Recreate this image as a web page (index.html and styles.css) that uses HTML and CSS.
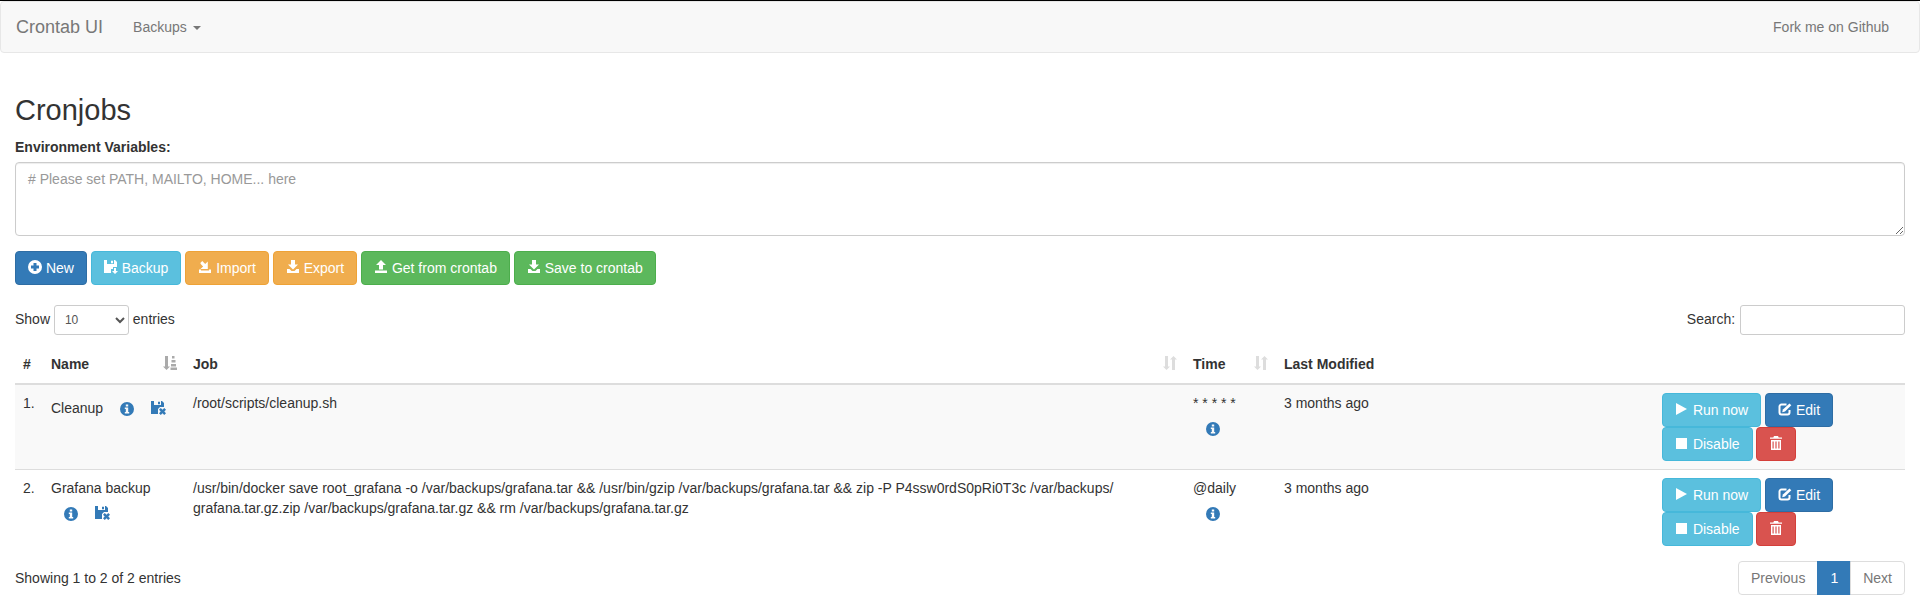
FILE: index.html
```html
<!DOCTYPE html>
<html lang="en">
<head>
<meta charset="utf-8">
<title>Crontab UI</title>
<link rel="stylesheet" href="styles.css">
</head>
<body>
<svg class="defs" width="0" height="0" aria-hidden="true">
  <symbol id="i-plus" viewBox="0 0 14 14"><path fill-rule="evenodd" d="M7 0a7 7 0 1 1 0 14A7 7 0 0 1 7 0zM5.500 3v2.500H3v3h2.500V11h3V8.500H11v-3H8.500V3z"/></symbol>
  <symbol id="i-info" viewBox="0 0 14 14"><path fill-rule="evenodd" d="M7 0a7 7 0 1 1 0 14A7 7 0 0 1 7 0zM5.800 2.600v2h2.400v-2zM4.800 5.600v1.300h1v3H4.800v1.500h4.400V9.900h-1V5.600z"/></symbol>
  <symbol id="i-floppy-save" viewBox="0 0 14 14"><path fill-rule="evenodd" d="M0 0h3v4h7V0h1l2 2v5H9v2H7v4H0z"/><path d="M7 .8h2v2.400H7z"/><path d="M10 8h2v3h2L11 14l-3-3h2z"/></symbol>
  <symbol id="i-floppy-remove" viewBox="0 0 15 14"><path fill-rule="evenodd" d="M0 0h3v4h7V0h1l2 2v4H9L7 8v5H0z"/><path d="M7 .8h2v2.400H7z"/><path d="M9.800 7l1.700 1.700L13.200 7 15 8.800l-1.700 1.700 1.700 1.700-1.800 1.800-1.700-1.700-1.700 1.700L8 12.200l1.700-1.700L8 8.800z"/></symbol>
  <symbol id="i-import" viewBox="0 0 14 14"><path d="M1 9.500h2v1h8v-1h2V13H1z"/><path d="M2.500 2.800L4.300 1l2.900 2.900L9.800 1.500V9H2.500l2.600-2.600L2.500 3.800z"/></symbol>
  <symbol id="i-save" viewBox="0 0 14 14"><path d="M5 0h4v4.500h3L7 9.500 2 4.500h3z"/><path d="M1 9h2.500l2 2h3l2-2H13v4H1z"/></symbol>
  <symbol id="i-open" viewBox="0 0 14 14"><path d="M7 0l5 5H9v4.500H5V5H2z"/><path d="M1 10.500h12V13H1z"/></symbol>
  <symbol id="i-play" viewBox="0 0 14 14"><path d="M1 1l11 6-11 6z"/></symbol>
  <symbol id="i-stop" viewBox="0 0 14 14"><path d="M1 2h11v11H1z"/></symbol>
  <symbol id="i-edit" viewBox="0 0 14 14"><path d="M11.500 8v2.500a2 2 0 0 1-2 2h-6a2 2 0 0 1-2-2v-6a2 2 0 0 1 2-2h5" fill="none" stroke="currentColor" stroke-width="2"/><path d="M11.500 1.500l1.800 1.800-6.300 6.300-2.800.6.700-2.700z"/></symbol>
  <symbol id="i-trash" viewBox="0 0 14 14"><path fill-rule="evenodd" d="M5 0h4l.7 1.500H13v1.300H1V1.500h3.300zM2 4h10v10H2zM3.500 5.500v7h1.200v-7zM6.400 5.500v7h1.200v-7zM9.300 5.500v7h1.200v-7z"/></symbol>
  <symbol id="i-sort" viewBox="0 0 14 14"><path d="M2 0h3v10.500h2L3.500 14 0 10.500h2z"/><path d="M9 14h3V3.500h2L10.500 0 7 3.500h2z"/></symbol>
  <symbol id="i-sort-alpha" viewBox="0 0 14 14"><path d="M2 0h3v10.500h2L3.500 14 0 10.500h2z"/><path d="M9 0h2.500v2.500H9zM8.500 4h4v2.500h-4zM8 8h5v2.500H8zM7.500 11.500h6.500V14H7.500z"/></symbol>
</svg>

<nav class="navbar">
  <a class="brand" href="#">Crontab UI</a>
  <a class="nav-link" href="#">Backups <span class="caret"></span></a>
  <a class="nav-link nav-right" href="#">Fork me on Github</a>
</nav>

<main class="container">
  <h2 class="title">Cronjobs</h2>
  <label class="env-label" for="env">Environment Variables:</label>
  <textarea id="env" class="env" placeholder="# Please set PATH, MAILTO, HOME... here"></textarea>

  <div class="toolbar">
    <a class="btn primary" href="#"><svg class="ic"><use href="#i-plus"/></svg> New</a>
    <a class="btn info" href="#"><svg class="ic"><use href="#i-floppy-save"/></svg> Backup</a>
    <a class="btn warning" href="#"><svg class="ic"><use href="#i-import"/></svg> Import</a>
    <a class="btn warning" href="#"><svg class="ic"><use href="#i-save"/></svg> Export</a>
    <a class="btn success" href="#"><svg class="ic"><use href="#i-open"/></svg> Get from crontab</a>
    <a class="btn success" href="#"><svg class="ic"><use href="#i-save"/></svg> Save to crontab</a>
  </div>

  <div class="table-controls">
    <label class="length">Show
      <select class="length-select"><option>10</option></select>
      entries</label>
    <label class="search">Search: <input class="search-input" type="search"></label>
  </div>

  <table class="jobs">
    <colgroup>
      <col class="c-num"><col class="c-name"><col class="c-job"><col class="c-time"><col class="c-mod"><col class="c-act">
    </colgroup>
    <thead>
      <tr>
        <th>#</th>
        <th class="sortable">Name<svg class="sort-ic active"><use href="#i-sort-alpha"/></svg></th>
        <th class="sortable">Job<svg class="sort-ic"><use href="#i-sort"/></svg></th>
        <th class="sortable">Time<svg class="sort-ic"><use href="#i-sort"/></svg></th>
        <th>Last Modified</th>
        <th></th>
      </tr>
    </thead>
    <tbody>
      <tr class="odd">
        <td>1.</td>
        <td>Cleanup <a class="icon-link" href="#"><svg class="ic"><use href="#i-info"/></svg></a> <a class="icon-link bare" href="#"><svg class="ic wide"><use href="#i-floppy-remove"/></svg></a></td>
        <td>/root/scripts/cleanup.sh</td>
        <td>* * * * * <a class="icon-link" href="#"><svg class="ic"><use href="#i-info"/></svg></a></td>
        <td>3 months ago</td>
        <td>
          <a class="btn info" href="#"><svg class="ic"><use href="#i-play"/></svg> Run now</a>
          <a class="btn primary" href="#"><svg class="ic"><use href="#i-edit"/></svg> Edit</a>
          <a class="btn info" href="#"><svg class="ic"><use href="#i-stop"/></svg> Disable</a>
          <a class="btn danger" href="#"><svg class="ic"><use href="#i-trash"/></svg></a>
        </td>
      </tr>
      <tr>
        <td>2.</td>
        <td>Grafana backup <a class="icon-link" href="#"><svg class="ic"><use href="#i-info"/></svg></a> <a class="icon-link bare" href="#"><svg class="ic wide"><use href="#i-floppy-remove"/></svg></a></td>
        <td>/usr/bin/docker save root_grafana -o /var/backups/grafana.tar &amp;&amp; /usr/bin/gzip /var/backups/grafana.tar &amp;&amp; zip -P P4ssw0rdS0pRi0T3c /var/backups/<wbr>grafana.tar.gz.zip /var/backups/grafana.tar.gz &amp;&amp; rm /var/backups/grafana.tar.gz</td>
        <td>@daily <a class="icon-link" href="#"><svg class="ic"><use href="#i-info"/></svg></a></td>
        <td>3 months ago</td>
        <td>
          <a class="btn info" href="#"><svg class="ic"><use href="#i-play"/></svg> Run now</a>
          <a class="btn primary" href="#"><svg class="ic"><use href="#i-edit"/></svg> Edit</a>
          <a class="btn info" href="#"><svg class="ic"><use href="#i-stop"/></svg> Disable</a>
          <a class="btn danger" href="#"><svg class="ic"><use href="#i-trash"/></svg></a>
        </td>
      </tr>
    </tbody>
  </table>

  <div class="table-footer">
    <div class="table-info">Showing 1 to 2 of 2 entries</div>
    <div class="pagination">
      <a class="page" href="#">Previous</a>
      <a class="page current" href="#">1</a>
      <a class="page" href="#">Next</a>
    </div>
  </div>
</main>
</body>
</html>
```

FILE: styles.css
```css
* { box-sizing: border-box; }
html, body { margin: 0; padding: 0; }
body {
  border-top: 1px solid #000;
  background: #fff;
  color: #333;
  font: 14px/20px "Liberation Sans", Arial, sans-serif;
}
a { text-decoration: none; }
.defs { position: absolute; }

.navbar {
  display: flex;
  align-items: center;
  height: 52px;
  padding: 0 15px;
  margin-bottom: 20px;
  background: #f8f8f8;
  border: 1px solid #e7e7e7;
  border-radius: 4px;
}
.brand { font-size: 18px; color: #777; padding: 15px 15px 15px 0; }
.nav-link { color: #777; padding: 15px; }
.nav-right { margin-left: auto; }
.caret {
  display: inline-block;
  width: 0; height: 0;
  margin-left: 2px;
  vertical-align: middle;
  border-top: 4px solid;
  border-left: 4px solid transparent;
  border-right: 4px solid transparent;
}

.container { padding: 0 15px; }
.title {
  margin: 41px 0 10px;
  font-size: 29px;
  font-weight: 500;
  line-height: 33px;
  color: #333;
}
.env-label { display: block; font-weight: 700; margin-bottom: 5px; }
.env {
  display: block;
  width: 100%;
  height: 74px;
  padding: 6px 12px;
  margin-bottom: 15px;
  color: #555;
  font: inherit;
  border: 1px solid #ccc;
  border-radius: 4px;
  box-shadow: inset 0 1px 1px rgba(0,0,0,.075);
}
.env::placeholder { color: #999; opacity: 1; }

.btn {
  display: inline-block;
  padding: 6px 12px;
  border: 1px solid transparent;
  border-radius: 4px;
  color: #fff;
  vertical-align: middle;
  white-space: nowrap;
}
.primary { background: #337ab7; border-color: #2e6da4; }
.info { background: #5bc0de; border-color: #46b8da; }
.warning { background: #f0ad4e; border-color: #eea236; }
.success { background: #5cb85c; border-color: #4cae4c; }
.danger { background: #d9534f; border-color: #d43f3a; }
.ic {
  display: inline-block;
  width: 14px;
  height: 14px;
  fill: currentColor;
  vertical-align: -1px;
}
.ic.wide { width: 15px; }

.table-controls {
  display: flex;
  justify-content: space-between;
  margin-top: 20px;
  height: 30px;
}
.length-select {
  width: 75px;
  height: 30px;
  padding: 5px 6px;
  font: 12px/18px "Liberation Sans", Arial, sans-serif;
  color: #555;
  background: #fff;
  border: 1px solid #ccc;
  border-radius: 3px;
}
.search-input {
  width: 165px;
  height: 30px;
  margin-left: 1px;
  padding: 5px 10px;
  border: 1px solid #ccc;
  border-radius: 3px;
  vertical-align: middle;
}

.jobs {
  width: 100%;
  table-layout: fixed;
  border-collapse: collapse;
  margin-top: 11px;
}
.c-num { width: 28px; }
.c-name { width: 142px; }
.c-time { width: 91px; }
.c-mod { width: 378px; }
.c-act { width: 251px; }
.jobs th {
  position: relative;
  padding: 7px 8px 9px;
  height: 38px;
  text-align: left;
  font-weight: 700;
  border-bottom: 2px solid #ddd;
}
.jobs td {
  padding: 8px;
  vertical-align: top;
  border-top: 1px solid #ddd;
}
.jobs .odd { background: #f9f9f9; }
.sort-ic {
  position: absolute;
  right: 8px;
  top: 10px;
  width: 14px;
  height: 14px;
  fill: #ddd;
}
.sort-ic.active { fill: #aaa; }
.icon-link {
  display: inline-block;
  padding: 6px 13px;
  color: #337ab7;
  vertical-align: middle;
}
.icon-link .ic { vertical-align: -2px; }
.icon-link.bare { padding-left: 0; padding-right: 0; }
.icon-link.bare .ic { vertical-align: -1px; }

.table-footer {
  display: flex;
  justify-content: space-between;
  padding-top: 7px;
}
.table-info { padding-top: 7px; }
.pagination { display: flex; }
.page {
  padding: 6px 12px;
  margin-left: -1px;
  color: #777;
  background: #fff;
  border: 1px solid #ddd;
}
.page:first-child { border-radius: 4px 0 0 4px; }
.page:last-child { border-radius: 0 4px 4px 0; }
.page.current { background: #337ab7; border-color: #337ab7; color: #fff; }
```
